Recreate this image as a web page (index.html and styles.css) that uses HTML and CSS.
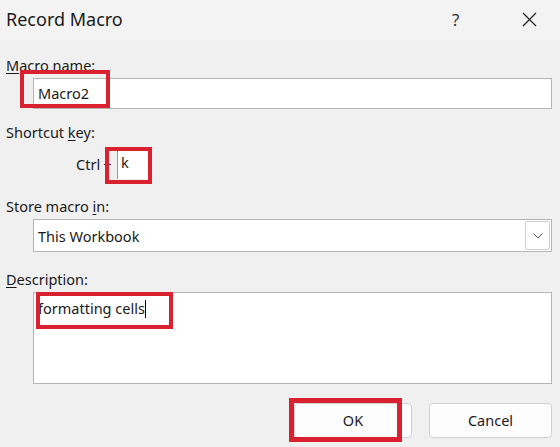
FILE: index.html
```html
<!DOCTYPE html>
<html>
<head>
  <meta charset="UTF-8">
  <title>Record Macro</title>
  <link rel="stylesheet" href="styles.css">
</head>
<body>
  <div class="dialog">
    <div class="titlebar">
      <span class="title">Record Macro</span>
      <span class="help">?</span>
      <span class="close">
        <svg width="15" height="15" viewBox="0 0 15 15"><path d="M1 1 L14 14 M14 1 L1 14" stroke="#222" stroke-width="1.3" fill="none"/></svg>
      </span>
    </div>

    <div class="content">
      <div class="label label-name"><u>M</u>acro name:</div>
      <div class="field field-name">Macro2</div>

      <div class="label label-key">Shortcut <u>k</u>ey:</div>
      <div class="key-row">
        <span class="ctrl">Ctrl<span class="plus">+</span></span>
        <span class="key-box">k</span>
      </div>

      <div class="label label-store">Store macro <u>i</u>n:</div>
      <div class="field select">
        <span>This Workbook</span>
        <span class="select-btn">
          <svg width="10" height="6" viewBox="0 0 10 6"><path d="M0.5 0.5 L5 5 L9.5 0.5" stroke="#555" stroke-width="1" fill="none"/></svg>
        </span>
      </div>

      <div class="label label-desc"><u>D</u>escription:</div>
      <div class="field textarea"><span class="desc-text">formatting cells</span><span class="caret"></span></div>

      <div class="buttons">
        <div class="btn btn-ok">OK</div>
        <div class="btn btn-cancel">Cancel</div>
      </div>
    </div>

    <!-- red annotation boxes -->
    <div class="mark mark-name"></div>
    <div class="mark mark-key"></div>
    <div class="mark mark-desc"></div>
    <div class="mark mark-ok"></div>
  </div>
</body>
</html>
```

FILE: styles.css
```css
body {
  margin: 0;
  font-family: "Noto Sans", "Open Sans", sans-serif;
  color: #1a1a1a;
  background: #f0f0f0;
}

.dialog {
  position: relative;
  width: 560px;
  height: 447px;
  background: #f0f0f0;
  overflow: hidden;
}

.titlebar {
  height: 40px;
  display: flex;
  align-items: center;
  background: #f3f3f3;
  padding-left: 6px;
}

.title {
  font-size: 18px;
  flex: 1;
  margin-top: -2px;
}

.help {
  font-size: 17px;
  color: #333;
  width: 20px;
  margin-right: 50px;
  margin-top: -2px;
}

.close {
  width: 38px;
  display: flex;
  margin-top: -1px;
}

.content {
  padding: 0 8px 0 6px;
  font-size: 14.5px;
}

.label {
  height: 20px;
  line-height: 20px;
}

.label u {
  text-decoration-thickness: 1px;
  text-underline-offset: 2px;
}

.label-name {
  margin-top: 15px;
}

.field {
  background: #fff;
  border: 1px solid #b4b4b4;
  margin-left: 27px;
  box-sizing: border-box;
}

.field-name {
  margin-top: 3px;
  height: 31px;
  line-height: 29px;
  padding-left: 4px;
}

.label-key {
  margin-top: 13px;
}

.key-row {
  display: flex;
  align-items: center;
  height: 34px;
  margin-top: 5px;
  padding-left: 70px;
}

.ctrl {
  width: 41px;
  white-space: nowrap;
}

.plus {
  margin-left: 3px;
}

.key-box {
  height: 30px;
  width: 34px;
  line-height: 26px;
  background: #fff;
  border-left: 1px solid #999;
  padding-left: 3px;
  box-sizing: border-box;
}

.label-store {
  margin-top: 15px;
}

.select {
  margin-top: 3px;
  height: 33px;
  display: flex;
  align-items: center;
  justify-content: space-between;
  padding-left: 4px;
}

.select-btn {
  width: 25px;
  height: 29px;
  border: 1px solid #d0d0d0;
  margin-right: 1px;
  box-sizing: border-box;
  display: flex;
  align-items: center;
  justify-content: center;
  border-radius: 2px;
}

.label-desc {
  margin-top: 17px;
}

.textarea {
  margin-top: 3px;
  height: 92px;
  padding: 4px 0 0 4px;
  line-height: 22px;
}

.caret {
  display: inline-block;
  width: 1px;
  height: 18px;
  background: #000;
  vertical-align: -4px;
}

.buttons {
  display: flex;
  justify-content: flex-end;
  gap: 17px;
  margin-top: 19px;
}

.btn {
  height: 35px;
  line-height: 33px;
  border: 1px solid #d0d0d0;
  border-radius: 4px;
  background: #fdfdfd;
  text-align: center;
  box-sizing: border-box;
}

.btn-ok {
  width: 118px;
}

.btn-cancel {
  width: 123px;
}

.mark {
  position: absolute;
  border: 4px solid #d9212f;
  box-sizing: border-box;
}

.mark-name {
  left: 20px;
  top: 70px;
  width: 90px;
  height: 38px;
}

.mark-key {
  left: 105px;
  top: 147px;
  width: 47px;
  height: 37px;
}

.mark-desc {
  left: 36px;
  top: 292px;
  width: 137px;
  height: 37px;
}

.mark-ok {
  left: 289px;
  top: 398px;
  width: 113px;
  height: 44px;
  border-width: 5px;
}
```
